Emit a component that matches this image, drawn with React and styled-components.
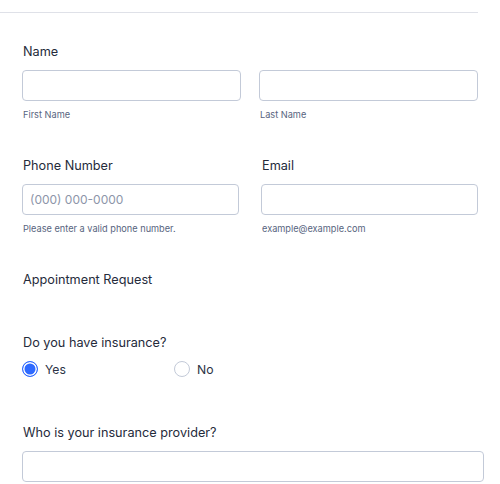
import React from "react";
import styled, { createGlobalStyle } from "styled-components";

const GlobalStyle = createGlobalStyle`
  body {
    margin: 0;
    background: #ffffff;
    font-family: Inter, "Noto Sans", sans-serif;
    color: #2c3345;
  }
`;

const App = () => {
  return (
    <>
      <GlobalStyle />
      <Page>
        <Form>
          <Field>
            <Label>Name</Label>
            <Row gap={18}>
              <Column>
                <Input />
                <SubLabel>First Name</SubLabel>
              </Column>
              <Column>
                <Input />
                <SubLabel>Last Name</SubLabel>
              </Column>
            </Row>
          </Field>

          <Row gap={22}>
            <Field>
              <Label>Phone Number</Label>
              <Input placeholder="(000) 000-0000" />
              <SubLabel>Please enter a valid phone number.</SubLabel>
            </Field>
            <Field>
              <Label>Email</Label>
              <Input />
              <SubLabel>example@example.com</SubLabel>
            </Field>
          </Row>

          <Field spacing={35}>
            <Label>Appointment Request</Label>
          </Field>

          <Field spacing={45}>
            <Label>Do you have insurance?</Label>
            <RadioGroup>
              <Option>
                <Radio checked />
                <OptionText>Yes</OptionText>
              </Option>
              <Option>
                <Radio />
                <OptionText>No</OptionText>
              </Option>
            </RadioGroup>
          </Field>

          <Field wide>
            <Label>Who is your insurance provider?</Label>
            <Input />
          </Field>
        </Form>
      </Page>
    </>
  );
};

export default App;

const Page = styled.div`
  width: 500px;
  height: 484px;
  overflow: hidden;
  padding-top: 12px;
  box-sizing: border-box;
`;

const Form = styled.div`
  border-top: 1px solid #dfe1e8;
  padding: 29px 0 0 22px;
  width: 478px;
  box-sizing: border-box;
`;

const Field = styled.div`
  display: flex;
  flex-direction: column;
  flex: 1;
  margin-bottom: ${(p) => (p.spacing ? p.spacing : 34)}px;
  margin-right: ${(p) => (p.wide ? "-6px" : "0")};
`;

const Row = styled.div`
  display: flex;
  gap: ${(p) => p.gap}px;
  margin-bottom: ${(p) => (p.gap === 22 ? 34 : 0)}px;

  & > ${Field} {
    margin-bottom: 0;
  }
`;

const Column = styled.div`
  flex: 1;
  display: flex;
  flex-direction: column;
`;

const Label = styled.div`
  font-size: 12.7px;
  font-weight: 400;
  line-height: 18px;
  color: #252b3b;
  padding: 1px 0 0 1px;
  margin-bottom: 9px;
`;

const Input = styled.input`
  height: 31px;
  box-sizing: border-box;
  border: 1px solid #c3cad8;
  border-radius: 4px;
  padding: 0 7px;
  font-family: Inter, "Noto Sans", sans-serif;
  font-size: 12px;
  color: #2c3345;
  outline: none;
  width: 100%;

  &::placeholder {
    color: #8d95a9;
  }
`;

const SubLabel = styled.div`
  font-size: 9.2px;
  line-height: 14px;
  color: #57647e;
  margin-top: 7px;
  padding-left: 1px;
`;

const RadioGroup = styled.div`
  display: flex;
  margin-top: -1px;
`;

const Option = styled.label`
  width: 152px;
  display: flex;
  align-items: center;
  gap: 7px;
  height: 18px;
`;

const Radio = styled.span`
  width: 16px;
  height: 16px;
  box-sizing: border-box;
  border-radius: 50%;
  border: 1px solid ${(p) => (p.checked ? "#2e69ff" : "#c3cad8")};
  background: ${(p) => (p.checked ? "#2e69ff" : "#ffffff")};
  box-shadow: ${(p) => (p.checked ? "inset 0 0 0 1.5px #ffffff" : "none")};
`;

const OptionText = styled.span`
  font-size: 12.2px;
  color: #2c3345;
`;
